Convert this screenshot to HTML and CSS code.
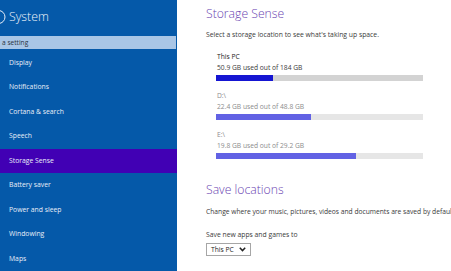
FILE: index.html
```html
<!DOCTYPE html>
<html>
<head>
<meta charset="utf-8">
<link rel="stylesheet" href="styles.css">
</head>
<body>
<div class="sidebar">
  <div class="header">
    <svg class="back" width="6" height="16" viewBox="0 0 6 16"><circle cx="-1.5" cy="8" r="6.5" fill="none" stroke="#e8eef8" stroke-width="1"/></svg>
    <span class="title">System</span>
  </div>
  <div class="search">a setting</div>
  <ul class="nav">
    <li>Display</li>
    <li>Notifications</li>
    <li>Cortana &amp; search</li>
    <li>Speech</li>
    <li class="active">Storage Sense</li>
    <li>Battery saver</li>
    <li>Power and sleep</li>
    <li>Windowing</li>
    <li>Maps</li>
  </ul>
</div>
<div class="content">
  <h1 class="heading">Storage Sense</h1>
  <p class="desc">Select a storage location to see what's taking up space.</p>
  <div class="drive">
    <div class="drive-name">This PC</div>
    <div class="drive-used">50.9 GB used out of 184 GB</div>
    <div class="bar"><div class="fill" style="width:27.7%"></div></div>
  </div>
  <div class="drive dim">
    <div class="drive-name">D:\</div>
    <div class="drive-used">22.4 GB used out of 48.8 GB</div>
    <div class="bar"><div class="fill" style="width:45.9%"></div></div>
  </div>
  <div class="drive dim">
    <div class="drive-name">E:\</div>
    <div class="drive-used">19.8 GB used out of 29.2 GB</div>
    <div class="bar"><div class="fill" style="width:67.8%"></div></div>
  </div>
  <h1 class="heading second">Save locations</h1>
  <p class="desc change">Change where your music, pictures, videos and documents are saved by default.</p>
  <p class="desc savenew">Save new apps and games to</p>
  <div class="select">
    <span>This PC</span>
    <svg width="7" height="5" viewBox="0 0 7 5"><path d="M0.8 0.8 L3.5 3.6 L6.2 0.8" fill="none" stroke="#222" stroke-width="1.5"/></svg>
  </div>
</div>
</body>
</html>
```
FILE: styles.css
```css
html, body {
  margin: 0;
  padding: 0;
}
body {
  width: 451px;
  height: 271px;
  overflow: hidden;
  display: flex;
  background: #ffffff;
  font-family: "Open Sans", "Noto Sans", sans-serif;
  white-space: nowrap;
}
.sidebar {
  width: 177px;
  flex: none;
  background: #0559a9;
  color: #e8eef8;
  display: flex;
  flex-direction: column;
  overflow: hidden;
}
.header {
  height: 39px;
  display: flex;
  align-items: center;
  padding-bottom: 2px;
  box-sizing: border-box;
}
.back {
  display: block;
  flex: none;
}
.title {
  margin-left: 3px;
  font-size: 12.3px;
  font-weight: 300;
  color: #eef3fa;
}
.search {
  height: 13px;
  margin-top: 0.5px;
  margin-right: 1px;
  background: #a9c6e6;
  color: #2a3440;
  font-size: 6.6px;
  line-height: 13px;
  padding-left: 2px;
}
.nav {
  list-style: none;
  margin: 1.5px 0 0 0;
  padding: 0;
}
.nav li {
  height: 24.5px;
  line-height: 24.5px;
  padding-left: 9px;
  font-size: 6.8px;
}
.nav li.active {
  background: #4100b4;
}
.content {
  flex: 1;
  padding-left: 29px;
  overflow: hidden;
}
.heading {
  margin: 6px 0 0 0;
  font-size: 12.2px;
  font-weight: 300;
  line-height: 16px;
  color: #6a44b2;
}
.heading.second {
  margin-top: 23px;
}
.desc {
  margin: 8px 0 0 0;
  font-size: 6.8px;
  line-height: 10px;
  color: #3a3a3a;
}
.desc.change {
  margin-top: 9px;
  font-size: 6.7px;
}
.desc.savenew {
  margin-top: 13px;
}
.drive {
  padding-left: 10px;
  margin-top: 8.5px;
}
.drive:first-of-type {
  margin-top: 10.5px;
}
.drive-name,
.drive-used {
  font-size: 6.7px;
  line-height: 11px;
  color: #222;
  padding-left: 1px;
}
.drive-used {
  color: #3a3a3a;
}
.bar {
  margin-top: 2.5px;
  width: 207px;
  height: 6px;
  background: #d3d3d3;
}
.fill {
  height: 100%;
  background: #1515d2;
}
.drive.dim .drive-name,
.drive.dim .drive-used {
  color: #8c8c8c;
}
.drive.dim .bar {
  background: #e6e6e6;
}
.drive.dim .fill {
  background: #6262e4;
}
.select {
  margin-top: 3px;
  width: 45px;
  height: 13px;
  box-sizing: border-box;
  border: 1px solid #a6a6a6;
  display: flex;
  align-items: center;
  padding-left: 4px;
  font-size: 6.7px;
  color: #222;
}
.select svg {
  margin-left: auto;
  margin-right: 4px;
  display: block;
}
```
